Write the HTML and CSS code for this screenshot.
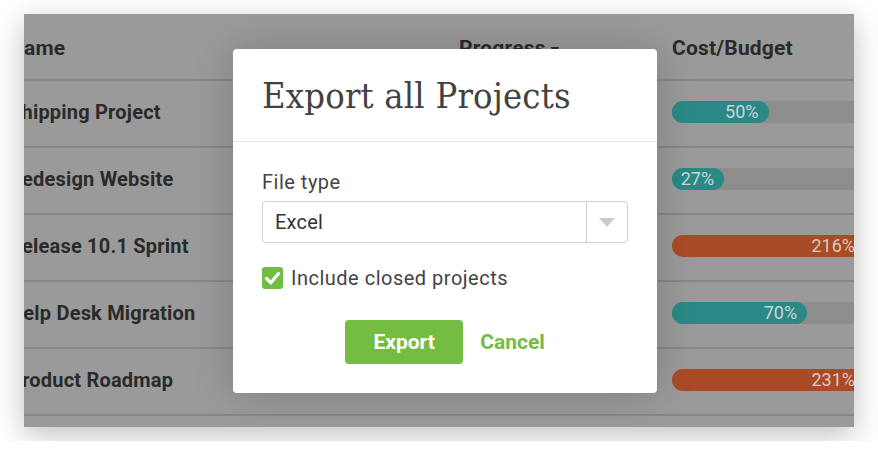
FILE: index.html
```html
<!DOCTYPE html>
<html lang="en">
<head>
<meta charset="utf-8">
<title>Export all Projects</title>
<link rel="stylesheet" href="styles.css">
</head>
<body>
<div class="frame">
  <div class="table">
    <div class="row head">
      <div class="cell">Name</div>
      <div class="cell">Progress <span class="caret">&#9662;</span></div>
      <div class="cell">Cost/Budget</div>
    </div>
    <div class="row">
      <div class="cell">Shipping Project</div>
      <div class="cell"><div class="pbar"></div></div>
      <div class="cell"><div class="track"><div class="fill teal" style="width:50%">50%</div></div></div>
    </div>
    <div class="row">
      <div class="cell">Redesign Website</div>
      <div class="cell"><div class="pbar"></div></div>
      <div class="cell"><div class="track"><div class="fill teal" style="width:27%">27%</div></div></div>
    </div>
    <div class="row">
      <div class="cell">Release 10.1 Sprint</div>
      <div class="cell"><div class="pbar"></div></div>
      <div class="cell"><div class="track"><div class="fill orange" style="width:100%">216%</div></div></div>
    </div>
    <div class="row">
      <div class="cell">Help Desk Migration</div>
      <div class="cell"><div class="pbar"></div></div>
      <div class="cell"><div class="track"><div class="fill teal" style="width:70%">70%</div></div></div>
    </div>
    <div class="row">
      <div class="cell">Product Roadmap</div>
      <div class="cell"><div class="pbar"></div></div>
      <div class="cell"><div class="track"><div class="fill orange" style="width:100%">231%</div></div></div>
    </div>
  </div>

  <div class="modal">
    <div class="modal-head">
      <h1 class="title">Export all Projects</h1>
    </div>
    <div class="modal-body">
      <div class="label">File type</div>
      <div class="select">
        <span class="select-value">Excel</span>
        <span class="select-arrow">
          <svg width="16" height="9" viewBox="0 0 16 9"><polygon points="0,0 16,0 8,9" fill="#cccccc"/></svg>
        </span>
      </div>
      <div class="check-row">
        <svg class="checkbox" width="21" height="22" viewBox="0 0 21 22">
          <rect x="0" y="0" width="21" height="22" rx="3" fill="#6fbd45"/>
          <path d="M4.5 11.5 L8.8 15.8 L16.5 6.5" fill="none" stroke="#ffffff" stroke-width="3.2" stroke-linecap="round" stroke-linejoin="round"/>
        </svg>
        <span class="check-label">Include closed projects</span>
      </div>
      <div class="actions">
        <button class="btn-primary">Export</button>
        <button class="btn-link">Cancel</button>
      </div>
    </div>
  </div>
</div>
</body>
</html>
```
FILE: styles.css
```css
html, body {
  margin: 0;
  padding: 0;
  background: #ffffff;
}
body {
  padding: 14px 24px;
  font-family: Roboto, "Liberation Sans", sans-serif;
}
.frame {
  position: relative;
  width: 830px;
  height: 413px;
  overflow: hidden;
  background: #9a9a9a;
  box-shadow: 0 8px 28px rgba(0, 0, 0, 0.25);
}
.table {
  margin-left: -15px;
  width: 905px;
}
.row {
  display: grid;
  grid-template-columns: 450px 213px 242px;
  height: 65px;
  border-bottom: 2px solid #878787;
  align-items: center;
  font-weight: 700;
  font-size: 20px;
  letter-spacing: 0.2px;
  color: #2a2a2a;
}
.row .cell {
  padding-bottom: 3px;
}
.row.head {
  height: 63px;
  padding-top: 2px;
  font-size: 21px;
}
.row.head .cell {
  padding-bottom: 0;
}
.caret {
  font-size: 15px;
}
.pbar {
  width: 84px;
  height: 22px;
  border-radius: 11px;
  background: #6a8f4a;
  margin-left: 2px;
}
.track {
  width: 193px;
  height: 22px;
  border-radius: 11px;
  background: #8d8d8d;
}
.fill {
  height: 22px;
  border-radius: 11px;
  box-sizing: border-box;
  padding-right: 10px;
  text-align: right;
  font-size: 18px;
  font-weight: 400;
  letter-spacing: 0;
  line-height: 22px;
  color: #cdd6d5;
}
.fill.teal {
  background: #2a8986;
}
.fill.orange {
  background: #a94b27;
  color: #dccabf;
}
.modal {
  position: absolute;
  left: 209px;
  top: 35px;
  width: 424px;
  height: 344px;
  background: #ffffff;
  border-radius: 4px;
  box-shadow: 0 0 40px rgba(0, 0, 0, 0.18);
  display: flex;
  flex-direction: column;
}
.modal-head {
  height: 93px;
  box-sizing: border-box;
  border-bottom: 1px solid #e3e3e3;
  padding: 0 29px;
  display: flex;
  align-items: center;
}
.title {
  margin: 0;
  font-family: "DejaVu Serif Condensed", "DejaVu Serif", serif;
  font-stretch: semi-condensed;
  font-weight: 400;
  font-size: 36px;
  color: #424242;
  letter-spacing: 0.2px;
}
.modal-body {
  padding: 29px 29px 0 29px;
  display: flex;
  flex-direction: column;
}
.label {
  font-size: 20px;
  line-height: 23px;
  letter-spacing: 0.5px;
  color: #444444;
}
.select {
  margin-top: 7px;
  height: 42px;
  box-sizing: border-box;
  border: 1.5px solid #cfcfcf;
  border-radius: 4px;
  display: flex;
  align-items: center;
}
.select-value {
  flex: 1;
  padding-left: 12px;
  font-size: 20px;
  letter-spacing: 0.2px;
  color: #333333;
}
.select-arrow {
  width: 40px;
  height: 100%;
  border-left: 1.5px solid #cfcfcf;
  display: flex;
  align-items: center;
  justify-content: center;
}
.check-row {
  margin-top: 23px;
  display: flex;
  align-items: center;
  gap: 8px;
}
.checkbox {
  display: block;
}
.check-label {
  font-size: 20px;
  color: #444444;
  letter-spacing: 0.5px;
}
.actions {
  margin-top: 30px;
  display: flex;
  justify-content: center;
  align-items: center;
  gap: 17px;
}
.btn-primary {
  width: 118px;
  height: 44px;
  border: none;
  border-radius: 4px;
  background: #75bc43;
  color: #ffffff;
  font-family: Roboto, "Liberation Sans", sans-serif;
  font-weight: 700;
  font-size: 21px;
}
.btn-link {
  border: none;
  background: none;
  padding: 0;
  color: #75bc43;
  font-family: Roboto, "Liberation Sans", sans-serif;
  font-weight: 700;
  font-size: 21px;
}
```
